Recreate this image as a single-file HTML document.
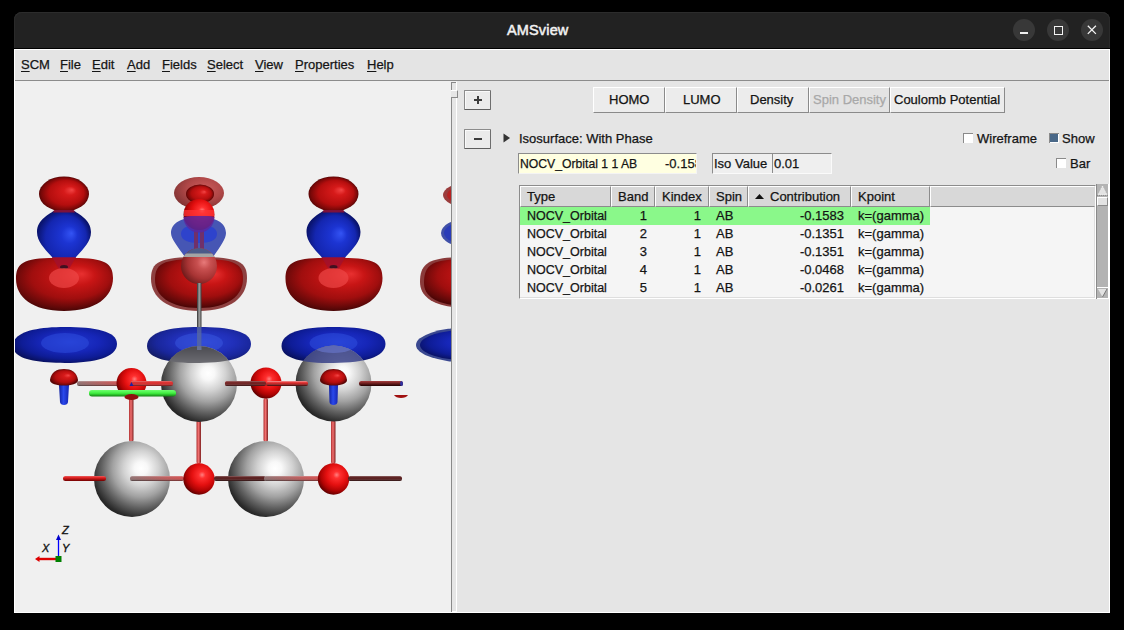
<!DOCTYPE html>
<html><head><meta charset="utf-8">
<style>
*{margin:0;padding:0;box-sizing:border-box}
html,body{width:1124px;height:630px;background:#000;overflow:hidden;font-family:"Liberation Sans",sans-serif;color:#141414;position:relative}
.a{position:absolute}
.t{white-space:pre;-webkit-text-stroke:0.25px currentColor}
u{text-decoration:underline;text-underline-offset:2px}
</style></head><body>
<div class="a" style="left:14px;top:12px;width:1096px;height:36px;background:#222;border-radius:8px 8px 0 0;box-shadow:inset 0 1px 0 #2c2c2c,inset 1px 0 0 #2a2a2a,inset -1px 0 0 #2a2a2a"></div>
<div class="a t" style="left:507px;top:23px;font-size:14.5px;line-height:14.5px;color:#f2f2f2;-webkit-text-stroke:0.5px #f2f2f2;letter-spacing:0.15px">AMSview</div>
<div class="a" style="left:1013px;top:19px;width:22px;height:22px;border-radius:50%;background:#383838"></div>
<div class="a" style="left:1047px;top:19px;width:22px;height:22px;border-radius:50%;background:#383838"></div>
<div class="a" style="left:1081px;top:19px;width:22px;height:22px;border-radius:50%;background:#383838"></div>
<div class="a" style="left:1020px;top:32px;width:8px;height:1.6px;background:#f0f0f0"></div>
<div class="a" style="left:1054px;top:26px;width:9px;height:9px;border:1.2px solid #f4f4f4"></div>
<svg class="a" style="left:1087px;top:25px" width="10" height="10"><path d="M0.8 0.8L8.9 8.9M8.9 0.8L0.8 8.9" stroke="#f4f4f4" stroke-width="1.3"/></svg>
<div class="a" style="left:14px;top:49px;width:1096px;height:1px;background:#fff"></div>
<div class="a" style="left:14px;top:49px;width:1px;height:564px;background:#fff"></div>
<div class="a" style="left:1109px;top:49px;width:1px;height:564px;background:#fff"></div>
<div class="a" style="left:14px;top:612px;width:1096px;height:1px;background:#fff"></div>
<div class="a" style="left:15px;top:50px;width:1094px;height:30px;background:#e4e4e4"></div>
<div class="a" style="left:15px;top:80px;width:1094px;height:1px;background:#8c8c8c"></div>
<div class="a t" style="left:21px;top:58px;font-size:13px;line-height:13px;color:#151515"><u>S</u>CM</div>
<div class="a t" style="left:60px;top:58px;font-size:13px;line-height:13px;color:#151515"><u>F</u>ile</div>
<div class="a t" style="left:92px;top:58px;font-size:13px;line-height:13px;color:#151515"><u>E</u>dit</div>
<div class="a t" style="left:127px;top:58px;font-size:13px;line-height:13px;color:#151515"><u>A</u>dd</div>
<div class="a t" style="left:162px;top:58px;font-size:13px;line-height:13px;color:#151515"><u>F</u>ields</div>
<div class="a t" style="left:207px;top:58px;font-size:13px;line-height:13px;color:#151515"><u>S</u>elect</div>
<div class="a t" style="left:255px;top:58px;font-size:13px;line-height:13px;color:#151515"><u>V</u>iew</div>
<div class="a t" style="left:295px;top:58px;font-size:13px;line-height:13px;color:#151515"><u>P</u>roperties</div>
<div class="a t" style="left:367px;top:58px;font-size:13px;line-height:13px;color:#151515"><u>H</u>elp</div>
<div class="a" style="left:15px;top:81px;width:436px;height:531px;background:#f0f0f0;overflow:hidden"><svg width="436" height="531" viewBox="15 81 436 531" style="position:absolute;left:0;top:0">
<defs>
<radialGradient id="gW" cx="0.62" cy="0.36" r="0.72" fx="0.62" fy="0.36">
 <stop offset="0" stop-color="#ffffff"/><stop offset="0.12" stop-color="#f8f8f8"/><stop offset="0.32" stop-color="#d2d2d2"/><stop offset="0.52" stop-color="#a2a2a2"/><stop offset="0.72" stop-color="#626262"/><stop offset="0.9" stop-color="#2c2c2c"/><stop offset="1" stop-color="#181818"/>
</radialGradient>
<radialGradient id="gR" cx="0.6" cy="0.37" r="0.72" fx="0.6" fy="0.37">
 <stop offset="0" stop-color="#ff8080"/><stop offset="0.15" stop-color="#ff3030"/><stop offset="0.45" stop-color="#e41010"/><stop offset="0.7" stop-color="#b00404"/><stop offset="0.88" stop-color="#6a0000"/><stop offset="1" stop-color="#400000"/>
</radialGradient>
<radialGradient id="gIR" cx="0.5" cy="0.5" r="0.5" fx="0.66" fy="0.38">
 <stop offset="0" stop-color="#f24545"/><stop offset="0.25" stop-color="#d61a1a"/><stop offset="0.7" stop-color="#b40e0e"/><stop offset="0.92" stop-color="#7a0808"/><stop offset="1" stop-color="#5a0505"/>
</radialGradient>
<radialGradient id="gD" cx="0.5" cy="0.4" r="0.62" fx="0.68" fy="0.3">
 <stop offset="0" stop-color="#e83030"/><stop offset="0.3" stop-color="#c81515"/><stop offset="0.65" stop-color="#a00e0e"/><stop offset="0.9" stop-color="#5e0808"/><stop offset="1" stop-color="#400404"/>
</radialGradient>
<radialGradient id="gB" cx="0.5" cy="0.5" r="0.5" fx="0.64" fy="0.4">
 <stop offset="0" stop-color="#3454f4"/><stop offset="0.3" stop-color="#1c34d2"/><stop offset="0.75" stop-color="#1426b0"/><stop offset="1" stop-color="#0a1470"/>
</radialGradient>
<radialGradient id="gBF" cx="0.55" cy="0.42" r="0.62" fx="0.55" fy="0.42">
 <stop offset="0" stop-color="#2038d0"/><stop offset="0.45" stop-color="#1626b8"/><stop offset="0.75" stop-color="#0e1c96"/><stop offset="1" stop-color="#08105c"/>
</radialGradient>
<radialGradient id="gRT" cx="0.64" cy="0.4" r="0.75" fx="0.64" fy="0.4"><stop offset="0" stop-color="#e87a7a"/><stop offset="0.25" stop-color="#c85050"/><stop offset="0.6" stop-color="#a83434"/><stop offset="1" stop-color="#5a1212"/></radialGradient>
<radialGradient id="gRT2" cx="0.6" cy="0.38" r="0.7" fx="0.6" fy="0.38"><stop offset="0" stop-color="#cc5c5c"/><stop offset="0.5" stop-color="#b04848"/><stop offset="1" stop-color="#7a3030"/></radialGradient>
<linearGradient id="capG" x1="0" y1="0" x2="0" y2="1"><stop offset="0.5" stop-color="#48484e"/><stop offset="1" stop-color="#6c6c72"/></linearGradient>
<linearGradient id="stemG" x1="0" y1="0" x2="1" y2="0"><stop offset="0" stop-color="#1020a0"/><stop offset="0.45" stop-color="#2a48ec"/><stop offset="1" stop-color="#1424b0"/></linearGradient>
<linearGradient id="bondR" x1="0" y1="0" x2="0" y2="1">
 <stop offset="0" stop-color="#e86060"/><stop offset="0.35" stop-color="#e02020"/><stop offset="1" stop-color="#700000"/>
</linearGradient>
<linearGradient id="bondRD" x1="0" y1="0" x2="0" y2="1">
 <stop offset="0" stop-color="#a84040"/><stop offset="0.45" stop-color="#702020"/><stop offset="1" stop-color="#200000"/>
</linearGradient>
<linearGradient id="bondGR" x1="0" y1="0" x2="1" y2="0">
 <stop offset="0" stop-color="#8a6a6a"/><stop offset="1" stop-color="#d04545"/>
</linearGradient>
<linearGradient id="bondRG" x1="0" y1="0" x2="1" y2="0">
 <stop offset="0" stop-color="#d04545"/><stop offset="1" stop-color="#505050"/>
</linearGradient>
<linearGradient id="shadeH" x1="0" y1="0" x2="0" y2="1">
 <stop offset="0" stop-color="#fff" stop-opacity="0.35"/><stop offset="0.4" stop-color="#fff" stop-opacity="0"/><stop offset="1" stop-color="#000" stop-opacity="0.55"/>
</linearGradient>
<linearGradient id="bondV" x1="0" y1="0" x2="1" y2="0">
 <stop offset="0" stop-color="#b03030"/><stop offset="0.45" stop-color="#f07070"/><stop offset="1" stop-color="#802020"/>
</linearGradient>
<linearGradient id="bondVG" x1="0" y1="0" x2="1" y2="0">
 <stop offset="0" stop-color="#303030"/><stop offset="0.5" stop-color="#a0a0a0"/><stop offset="1" stop-color="#404040"/>
</linearGradient>
<linearGradient id="green" x1="0" y1="0" x2="0" y2="1">
 <stop offset="0" stop-color="#70ff70"/><stop offset="0.5" stop-color="#40ee40"/><stop offset="1" stop-color="#108010"/>
</linearGradient>
<g id="colTop">
 <ellipse cx="0" cy="194" rx="25" ry="17.5" fill="url(#gIR)"/>
 <path d="M-9 210 C-14 214 -27 219 -27 232 C-27 242 -19 249 -12 257 L-6 268 L6 268 L12 257 C19 249 27 242 27 232 C27 219 14 214 9 210 Z" fill="url(#gB)"/>
 <path d="M-10 210 L10 210 L11 212.5 L-11 212.5 Z" fill="#b01020" opacity="0.7"/>
 <path d="M-48 279 C-48 262 -40 257 0 258 C40 257 49 262 49 278 C49 297 32 311 0 311 C-32 311 -48 297 -48 279 Z" fill="url(#gD)"/>
 <path d="M-12 257 L12 257 L5 269 L-5 269 Z" fill="#a01030" opacity="0.75"/>
 <ellipse cx="0" cy="267" rx="4" ry="2" fill="#401020"/>
 <ellipse cx="0" cy="278" rx="15" ry="10" fill="#f04a4a" opacity="0.65"/>
</g>
<g id="flatB">
 <path d="M-52 346 C-52 332 -30 327 0 327 C30 327 52 331 52 344 C52 357 30 363 0 363 C-30 363 -52 359 -52 346 Z" fill="url(#gBF)"/>
 <ellipse cx="0" cy="343" rx="24" ry="10" fill="#3050e0" opacity="0.5"/>
</g>
<clipPath id="cs1"><circle cx="199" cy="384" r="38"/></clipPath>
<clipPath id="cs2"><circle cx="333.5" cy="383.5" r="38"/></clipPath>
<clipPath id="capB"><path d="M150 240 H250 V257 H150 Z"/></clipPath><clipPath id="sphB"><circle cx="199" cy="266" r="18"/></clipPath>
</defs>
<!-- column D partial -->
<ellipse cx="467" cy="195" rx="24" ry="12" fill="#9a3c3c"/>
<ellipse cx="469" cy="195" rx="22" ry="10" fill="#b52222"/>
<ellipse cx="467" cy="233" rx="26" ry="14" fill="#4050a8"/>
<ellipse cx="469" cy="233" rx="25" ry="12" fill="#2a3cb8"/>
<path d="M420 282 C420 262 430 257 468 257 C500 257 512 262 512 282 C512 300 495 308 468 308 C440 308 420 300 420 282 Z" fill="#8a3a3a"/>
<path d="M424 283 C424 264 433 259 468 259 C500 259 510 264 510 282 C510 298 494 306 468 306 C442 306 424 299 424 283 Z" fill="url(#gD)"/>
<ellipse cx="468" cy="345" rx="52" ry="17.5" fill="#3a4890"/>
<ellipse cx="470" cy="345" rx="50" ry="15.5" fill="url(#gBF)"/>
<use href="#colTop" x="64"/>
<use href="#colTop" x="333.5"/>
<!-- column B -->
<ellipse cx="199" cy="193" rx="25" ry="16" fill="url(#gRT2)"/>
<ellipse cx="200" cy="194" rx="14" ry="9.5" fill="url(#gIR)"/>
<path d="M171 233 C171 223 182 217 199 217 C216 217 226 223 226 233 C226 239 220 247 213 257 L185 257 C178 247 171 239 171 233 Z" fill="#4656b4"/>
<path d="M181 234 C181 227 189 225 199 225 C209 225 217 227 217 234 C217 240 210 243 199 243 C188 243 181 240 181 234 Z" fill="#2a40d0" opacity="0.85"/>
<rect x="194" y="228" width="4" height="22" fill="#70306a"/>
<rect x="200" y="228" width="4" height="22" fill="#70306a"/>
<circle cx="199" cy="214.5" r="15.5" fill="url(#gR)"/>
<path d="M183.5 217 C190 216 205 215 214.5 217 A15.5 15.5 0 0 1 183.5 217 Z" fill="#5a28a0" opacity="0.85"/>
<rect x="184" y="210" width="30" height="6" fill="#ff3535" opacity="0.75"/>
<path d="M151 279 C151 262 159 257 199 257 C239 257 247 262 247 278 C247 297 231 311 199 311 C167 311 151 297 151 279 Z" fill="#8e4040"/>
<path d="M155 280 C155 264 162 259 199 259 C236 259 243 264 243 279 C243 295 229 308 199 308 C169 308 155 295 155 280 Z" fill="url(#gD)"/>
<circle cx="199" cy="266" r="18" fill="url(#gRT)"/>
<g clip-path="url(#capB)"><g clip-path="url(#sphB)"><circle cx="199" cy="266" r="18" fill="#4c5a88"/><rect x="180" y="253.5" width="40" height="3.5" fill="#a4a4a4"/></g></g>
<rect x="197" y="283" width="4.5" height="63" fill="url(#bondVG)"/>
<!-- flat blue row (behind white spheres) -->
<use href="#flatB" x="65"/>
<g opacity="0.95"><use href="#flatB" x="199"/></g>
<use href="#flatB" x="333.5"/>
<rect x="197" y="327" width="4.5" height="19" fill="#5a6aa0" opacity="0.8"/>
<!-- vertical bonds -->
<rect x="129" y="394" width="4.5" rx="2" height="48" fill="url(#bondV)"/>
<rect x="196.5" y="420" width="4.5" rx="2" height="44" fill="url(#bondV)"/>
<rect x="263.5" y="398" width="4.5" rx="2" height="44" fill="url(#bondV)"/>
<rect x="331" y="420" width="4.5" rx="2" height="44" fill="url(#bondV)"/>
<!-- white spheres row 1 -->
<circle cx="199" cy="384" r="38" fill="url(#gW)"/>
<circle cx="333.5" cy="383.5" r="38" fill="url(#gW)"/>
<g clip-path="url(#cs1)"><path d="M147 346 C147 332 169 327 199 327 C229 327 251 331 251 344 C251 357 229 363 199 363 C169 363 147 359 147 346 Z" fill="url(#capG)"/><rect x="197" y="340" width="4.5" height="10" fill="#7080b0" opacity="0.7"/></g>
<g clip-path="url(#cs2)"><path d="M281 346 C281 332 303 327 333.5 327 C364 327 386 331 386 344 C386 357 364 363 333.5 363 C303 363 281 359 281 346 Z" fill="#3a4288" opacity="0.85"/><ellipse cx="333.5" cy="343" rx="24" ry="10" fill="#6a7ad0" opacity="0.6"/></g>
<!-- bonds row 1 -->
<rect x="77" y="381" width="46" height="5" rx="2.5" fill="url(#bondGR)"/>
<rect x="77" y="381" width="46" height="5" rx="2.5" fill="url(#shadeH)"/>
<circle cx="131.5" cy="383" r="15" fill="url(#gR)"/>
<rect x="130" y="381" width="43" height="5" rx="2.5" fill="#d82020"/>
<rect x="130" y="381" width="43" height="5" rx="2.5" fill="url(#shadeH)"/>
<path d="M129.5 386 L131.5 382 L133.5 386 Z" fill="#2020a0"/>
<rect x="225" y="381" width="42" height="5" rx="2.5" fill="url(#bondGR)" transform="rotate(180 246 383.5)"/>
<rect x="225" y="381" width="42" height="5" rx="2.5" fill="url(#shadeH)"/>
<circle cx="266" cy="383" r="15.5" fill="url(#gR)"/>
<rect x="266" y="381" width="42" height="5" rx="2.5" fill="url(#bondR)"/>
<rect x="266" y="381" width="42" height="5" rx="2.5" fill="url(#shadeH)"/>
<rect x="225" y="381" width="41" height="5" rx="2.5" fill="#601010" opacity="0.9"/>
<rect x="225" y="381" width="41" height="5" rx="2.5" fill="url(#shadeH)"/>
<rect x="359" y="381" width="44" height="5" rx="2.5" fill="url(#bondRD)"/>
<rect x="400" y="381" width="3" height="5" rx="2.5" fill="#3030a0"/>
<!-- mushrooms -->
<path d="M59 385 L69 385 L68 402 C68 406 60 406 60 402 Z" fill="url(#stemG)"/>
<path d="M50 380 C51 372 57 369 64 369 C71 369 77 372 78 380 C78 384 71 385.5 64 385.5 C57 385.5 50 384 50 380 Z" fill="url(#gIR)"/>
<path d="M329 385 L338 385 L337.5 402 C337.5 406 329.5 406 329.5 402 Z" fill="url(#stemG)"/>
<path d="M320 380 C321 372 327 369 333.5 369 C340 369 346 372 347 380 C347 384 340 385.5 333.5 385.5 C327 385.5 320 384 320 380 Z" fill="url(#gIR)"/>
<path d="M394 395 C396 399 406 399 408 395 Z" fill="#a01010"/>
<!-- green -->
<rect x="89" y="390" width="87" height="6.5" rx="3" fill="url(#green)"/>
<ellipse cx="131.5" cy="397" rx="7" ry="3" fill="#901010"/>
<!-- row 2 -->
<circle cx="132" cy="479" r="38" fill="url(#gW)"/>
<circle cx="266" cy="479" r="38" fill="url(#gW)"/>
<rect x="63" y="476" width="43" height="5" rx="2.5" fill="url(#bondR)"/>
<rect x="130" y="476" width="54" height="5" rx="2.5" fill="url(#bondGR)"/>
<rect x="130" y="476" width="54" height="5" rx="2.5" fill="url(#shadeH)"/>
<circle cx="199" cy="479" r="15.7" fill="url(#gR)"/>
<rect x="214" y="476" width="52" height="5" rx="2.5" fill="#501010"/>
<rect x="214" y="476" width="52" height="5" rx="2.5" fill="url(#shadeH)"/>
<rect x="264" y="476" width="56" height="5" rx="2.5" fill="url(#bondGR)"/>
<rect x="264" y="476" width="56" height="5" rx="2.5" fill="url(#shadeH)"/>
<circle cx="333.5" cy="479" r="15.7" fill="url(#gR)"/>
<rect x="348" y="476" width="54" height="5" rx="2.5" fill="#501010"/>
<rect x="348" y="476" width="54" height="5" rx="2.5" fill="url(#shadeH)"/>
<!-- axes -->
<path d="M58.5 557 V539" stroke="#0000ff" stroke-width="1.3"/>
<path d="M56 540 L58.5 534.5 L61 540 Z" fill="#0000cc"/>
<path d="M56 559 H38" stroke="#dd0000" stroke-width="2.4"/>
<path d="M39.5 556 L35 559 L39.5 562 Z" fill="#dd0000"/>
<rect x="55.5" y="556" width="6" height="6" fill="#008000"/>
<text x="62" y="534" font-family="Liberation Sans" font-style="italic" font-size="11" fill="#111" stroke="#111" stroke-width="0.35">Z</text>
<text x="62" y="552" font-family="Liberation Sans" font-style="italic" font-size="11" fill="#111" stroke="#111" stroke-width="0.35">Y</text>
<text x="42" y="552" font-family="Liberation Sans" font-style="italic" font-size="11" fill="#111" stroke="#111" stroke-width="0.35">X</text>
</svg>
</div>
<div class="a" style="left:451px;top:82px;width:1px;height:530px;background:#8a8a8a"></div>
<div class="a" style="left:452px;top:82px;width:4px;height:530px;background:#e6e6e6"></div>
<div class="a" style="left:451px;top:82px;width:6px;height:1px;background:#8a8a8a"></div>
<div class="a" style="left:456px;top:82px;width:1px;height:530px;background:#fff"></div>
<div class="a" style="left:452px;top:611px;width:4px;height:1px;background:#fff"></div>
<div class="a" style="left:457px;top:81px;width:652px;height:531px;background:#e5e5e5"></div>
<div class="a" style="left:451px;top:81px;width:6px;height:1px;background:#f0f0f0"></div>
<div class="a" style="left:451px;top:90px;width:7px;height:8px;background:#e6e6e6;border-top:1px solid #fff;border-bottom:1px solid #8a8a8a;border-right:1px solid #8a8a8a"></div>
<div class="a" style="left:464px;top:90px;width:27px;height:20px;background:#ebebeb;border:1px solid #8c8c8c;border-right-color:#6e6e6e;border-bottom-color:#5e5e5e;border-radius:1px;box-shadow:inset 1px 1px 0 #fafafa"></div>
<div class="a" style="left:464px;top:129px;width:27px;height:20px;background:#ebebeb;border:1px solid #8c8c8c;border-right-color:#6e6e6e;border-bottom-color:#5e5e5e;border-radius:1px;box-shadow:inset 1px 1px 0 #fafafa"></div>
<div class="a" style="left:474px;top:99px;width:8px;height:2px;background:#3c3c3c"></div>
<div class="a" style="left:477px;top:96px;width:2px;height:8px;background:#3c3c3c"></div>
<div class="a" style="left:474px;top:138px;width:8px;height:2px;background:#3c3c3c"></div>
<div class="a" style="left:593px;top:87px;width:72px;height:26px;background:#ececec;border-top:1px solid #fff;border-left:1px solid #fff;border-right:1px solid #8a8a8a;border-bottom:1px solid #8a8a8a"></div>
<div class="a" style="left:665px;top:87px;width:72px;height:26px;background:#ececec;border-top:1px solid #fff;border-left:1px solid #fff;border-right:1px solid #8a8a8a;border-bottom:1px solid #8a8a8a"></div>
<div class="a" style="left:737px;top:87px;width:72px;height:26px;background:#ececec;border-top:1px solid #fff;border-left:1px solid #fff;border-right:1px solid #8a8a8a;border-bottom:1px solid #8a8a8a"></div>
<div class="a" style="left:809px;top:87px;width:81px;height:26px;background:#e3e3e3;border-top:1px solid #fff;border-left:1px solid #fff;border-right:1px solid #8a8a8a;border-bottom:1px solid #8a8a8a"></div>
<div class="a" style="left:890px;top:87px;width:115px;height:26px;background:#ececec;border-top:1px solid #fff;border-left:1px solid #fff;border-right:1px solid #8a8a8a;border-bottom:1px solid #8a8a8a"></div>
<div class="a t" style="left:609px;top:93px;font-size:13px;line-height:13px;">HOMO</div>
<div class="a t" style="left:683px;top:93px;font-size:13px;line-height:13px;">LUMO</div>
<div class="a t" style="left:750px;top:93px;font-size:13px;line-height:13px;">Density</div>
<div class="a t" style="left:813px;top:93px;font-size:13px;line-height:13px;color:#a8a8a8">Spin Density</div>
<div class="a t" style="left:894px;top:93px;font-size:13px;line-height:13px;">Coulomb Potential</div>
<svg class="a" style="left:503px;top:133px" width="8" height="10"><path d="M0.5 0.5L7 5L0.5 9.5Z" fill="#333"/></svg>
<div class="a t" style="left:519px;top:132px;font-size:13px;line-height:13px;">Isosurface: With Phase</div>
<div class="a" style="left:518px;top:153px;width:179px;height:21px;background:#ffffe1;border-top:1px solid #8c8c8c;border-left:1px solid #8c8c8c;border-bottom:1px solid #f4f4f4;border-right:1px solid #f4f4f4;overflow:hidden"><div class="a t" style="left:1px;top:4px;font-size:12.2px;line-height:13px">NOCV_Orbital 1 1 AB</div><div class="a t" style="left:146px;top:3px;font-size:13px;line-height:13px">-0.1583</div></div>
<div class="a" style="left:712px;top:153px;width:120px;height:21px;background:#efefef;border-top:1px solid #8c8c8c;border-left:1px solid #8c8c8c;border-bottom:1px solid #fafafa;border-right:1px solid #fafafa"></div>
<div class="a" style="left:772px;top:154px;width:1px;height:19px;background:#8c8c8c"></div>
<div class="a t" style="left:714px;top:157px;font-size:13px;line-height:13px;">Iso Value</div>
<div class="a t" style="left:774px;top:157px;font-size:13px;line-height:13px;">0.01</div>
<div class="a" style="left:963px;top:133px;width:10px;height:10px;background:#fff;border-top:1px solid #8a8a8a;border-left:1px solid #8a8a8a"></div>
<div class="a" style="left:1049px;top:133px;width:10px;height:10px;background:#fff;border-top:1px solid #8a8a8a;border-left:1px solid #8a8a8a"></div>
<div class="a" style="left:1050px;top:134px;width:8px;height:8px;background:#4a6888"></div>
<div class="a" style="left:1056px;top:158px;width:10px;height:10px;background:#fff;border-top:1px solid #8a8a8a;border-left:1px solid #8a8a8a"></div>
<div class="a t" style="left:977px;top:132px;font-size:13px;line-height:13px;">Wireframe</div>
<div class="a t" style="left:1062px;top:132px;font-size:13px;line-height:13px;">Show</div>
<div class="a t" style="left:1070px;top:157px;font-size:13px;line-height:13px;">Bar</div>
<div class="a" style="left:519px;top:185px;width:577px;height:114px;background:#f5f5f5;border-top:1px solid #8c8c8c;border-left:1px solid #8c8c8c;border-right:1px solid #fff;border-bottom:1px solid #fff"></div>
<div class="a" style="left:1094px;top:186px;width:1px;height:112px;background:#dedede"></div>
<div class="a" style="left:520px;top:297px;width:575px;height:1px;background:#dedede"></div>
<div class="a" style="left:520px;top:186px;width:91px;height:21px;background:#d8d8d8;border-top:1px solid #fff;border-left:1px solid #fff;border-right:1px solid #8c8c8c;border-bottom:1px solid #8c8c8c"></div>
<div class="a" style="left:611px;top:186px;width:44px;height:21px;background:#d8d8d8;border-top:1px solid #fff;border-left:1px solid #fff;border-right:1px solid #8c8c8c;border-bottom:1px solid #8c8c8c"></div>
<div class="a" style="left:655px;top:186px;width:54px;height:21px;background:#d8d8d8;border-top:1px solid #fff;border-left:1px solid #fff;border-right:1px solid #8c8c8c;border-bottom:1px solid #8c8c8c"></div>
<div class="a" style="left:709px;top:186px;width:39px;height:21px;background:#d8d8d8;border-top:1px solid #fff;border-left:1px solid #fff;border-right:1px solid #8c8c8c;border-bottom:1px solid #8c8c8c"></div>
<div class="a" style="left:748px;top:186px;width:103px;height:21px;background:#d8d8d8;border-top:1px solid #fff;border-left:1px solid #fff;border-right:1px solid #8c8c8c;border-bottom:1px solid #8c8c8c"></div>
<div class="a" style="left:851px;top:186px;width:79px;height:21px;background:#d8d8d8;border-top:1px solid #fff;border-left:1px solid #fff;border-right:1px solid #8c8c8c;border-bottom:1px solid #8c8c8c"></div>
<div class="a" style="left:930px;top:186px;width:165px;height:21px;background:#d8d8d8;border-top:1px solid #fff;border-left:1px solid #fff;border-right:1px solid #d8d8d8;border-bottom:1px solid #8c8c8c"></div>
<div class="a t" style="left:527px;top:190px;font-size:13px;line-height:13px;">Type</div>
<div class="a t" style="left:618px;top:190px;font-size:13px;line-height:13px;">Band</div>
<div class="a t" style="left:662px;top:190px;font-size:13px;line-height:13px;">Kindex</div>
<div class="a t" style="left:716px;top:190px;font-size:13px;line-height:13px;">Spin</div>
<div class="a t" style="left:770px;top:190px;font-size:13px;line-height:13px;">Contribution</div>
<div class="a t" style="left:858px;top:190px;font-size:13px;line-height:13px;">Kpoint</div>
<svg class="a" style="left:754px;top:193px" width="11" height="7"><path d="M1 6L5.5 1L10 6Z" fill="#111"/></svg>
<div class="a" style="left:520px;top:207px;width:410px;height:18px;background:#8af88a"></div>
<div class="a t" style="left:527px;top:210px;font-size:12.5px;line-height:12.5px;">NOCV_Orbital</div>
<div class="a t" style="right:477px;top:209px;font-size:13px;line-height:13px;text-align:right;">1</div>
<div class="a t" style="right:423px;top:209px;font-size:13px;line-height:13px;text-align:right;">1</div>
<div class="a t" style="left:716px;top:209px;font-size:13px;line-height:13px;">AB</div>
<div class="a t" style="right:280px;top:209px;font-size:13px;line-height:13px;text-align:right;">-0.1583</div>
<div class="a t" style="left:858px;top:209px;font-size:13px;line-height:13px;">k=(gamma)</div>
<div class="a t" style="left:527px;top:228px;font-size:12.5px;line-height:12.5px;">NOCV_Orbital</div>
<div class="a t" style="right:477px;top:227px;font-size:13px;line-height:13px;text-align:right;">2</div>
<div class="a t" style="right:423px;top:227px;font-size:13px;line-height:13px;text-align:right;">1</div>
<div class="a t" style="left:716px;top:227px;font-size:13px;line-height:13px;">AB</div>
<div class="a t" style="right:280px;top:227px;font-size:13px;line-height:13px;text-align:right;">-0.1351</div>
<div class="a t" style="left:858px;top:227px;font-size:13px;line-height:13px;">k=(gamma)</div>
<div class="a t" style="left:527px;top:246px;font-size:12.5px;line-height:12.5px;">NOCV_Orbital</div>
<div class="a t" style="right:477px;top:245px;font-size:13px;line-height:13px;text-align:right;">3</div>
<div class="a t" style="right:423px;top:245px;font-size:13px;line-height:13px;text-align:right;">1</div>
<div class="a t" style="left:716px;top:245px;font-size:13px;line-height:13px;">AB</div>
<div class="a t" style="right:280px;top:245px;font-size:13px;line-height:13px;text-align:right;">-0.1351</div>
<div class="a t" style="left:858px;top:245px;font-size:13px;line-height:13px;">k=(gamma)</div>
<div class="a t" style="left:527px;top:264px;font-size:12.5px;line-height:12.5px;">NOCV_Orbital</div>
<div class="a t" style="right:477px;top:263px;font-size:13px;line-height:13px;text-align:right;">4</div>
<div class="a t" style="right:423px;top:263px;font-size:13px;line-height:13px;text-align:right;">1</div>
<div class="a t" style="left:716px;top:263px;font-size:13px;line-height:13px;">AB</div>
<div class="a t" style="right:280px;top:263px;font-size:13px;line-height:13px;text-align:right;">-0.0468</div>
<div class="a t" style="left:858px;top:263px;font-size:13px;line-height:13px;">k=(gamma)</div>
<div class="a t" style="left:527px;top:282px;font-size:12.5px;line-height:12.5px;">NOCV_Orbital</div>
<div class="a t" style="right:477px;top:281px;font-size:13px;line-height:13px;text-align:right;">5</div>
<div class="a t" style="right:423px;top:281px;font-size:13px;line-height:13px;text-align:right;">1</div>
<div class="a t" style="left:716px;top:281px;font-size:13px;line-height:13px;">AB</div>
<div class="a t" style="right:280px;top:281px;font-size:13px;line-height:13px;text-align:right;">-0.0261</div>
<div class="a t" style="left:858px;top:281px;font-size:13px;line-height:13px;">k=(gamma)</div>
<div class="a" style="left:1096px;top:184px;width:13px;height:115px;background:#b3b3b3;border-left:1px solid #8a8a8a;border-right:1px solid #fff"></div>
<div class="a" style="left:1097px;top:185px;width:11px;height:11px;background:#b3b3b3;border-bottom:1px solid #8a8a8a"></div>
<svg class="a" style="left:1097px;top:185px" width="11" height="11"><path d="M5.5 1L10 10H1Z" fill="#e3e3e3" stroke="#fff" stroke-width="0.7" stroke-dasharray="1 1"/></svg>
<div class="a" style="left:1097px;top:197px;width:11px;height:9px;background:#e3e3e3;border-top:1px solid #fff;border-left:1px solid #fff;border-right:1px solid #8a8a8a;border-bottom:1px solid #8a8a8a"></div>
<div class="a" style="left:1097px;top:287px;width:11px;height:12px;background:#b3b3b3;border-top:1px solid #fff;border-bottom:1px solid #fff"></div>
<svg class="a" style="left:1097px;top:288px" width="11" height="10"><path d="M1 1H10L5.5 9Z" fill="#e3e3e3"/><path d="M10 1L5.5 9" stroke="#777" stroke-width="1"/></svg>
</body></html>
